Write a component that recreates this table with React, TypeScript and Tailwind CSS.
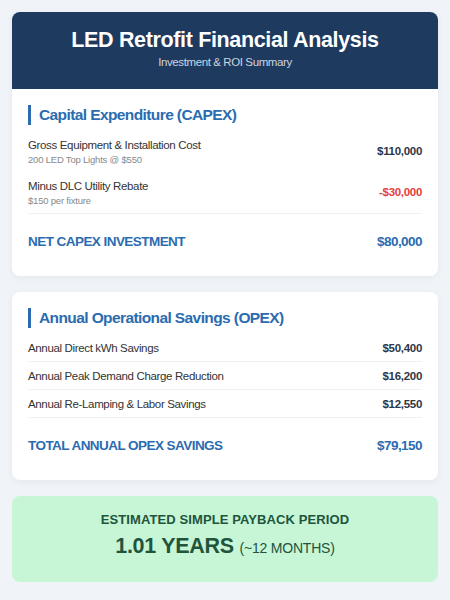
import React from 'react';

const capexRows = [
  { label: 'Gross Equipment & Installation Cost', sub: '200 LED Top Lights @ $550', value: '$110,000', negative: false },
  { label: 'Minus DLC Utility Rebate', sub: '$150 per fixture', value: '-$30,000', negative: true },
];

const opexRows = [
  { label: 'Annual Direct kWh Savings', value: '$50,400' },
  { label: 'Annual Peak Demand Charge Reduction', value: '$16,200' },
  { label: 'Annual Re-Lamping & Labor Savings', value: '$12,550' },
];

const SectionTitle = ({ children }: { children: React.ReactNode }) => (
  <h2 className="mb-1.5 border-l-[3px] border-[#2b6cb0] pl-2 text-[15.5px] leading-5 font-bold tracking-[-0.6px] text-[#2b6cb0]">
    {children}
  </h2>
);

const TotalRow = ({ label, value }: { label: string; value: string }) => (
  <div className="flex items-center justify-between border-t border-[#edf2f7] pt-5 pb-[10px] text-[13.5px] leading-4 font-bold tracking-[-0.55px] text-[#2b6cb0]">
    <span>{label}</span>
    <span>{value}</span>
  </div>
);

export default function App() {
  return (
    <div className="min-h-screen bg-[#f0f4f8] p-3 font-['Liberation_Sans',Arial,sans-serif]">
      {/* Header + CAPEX */}
      <div className="rounded-lg bg-white shadow-[0_2px_8px_rgba(0,0,0,0.05)]">
        <header className="rounded-t-lg bg-[#1e3a5f] pt-[14px] pb-[19px] text-center">
          <h1 className="text-[21.5px] leading-7 font-bold tracking-[-0.35px] text-white">LED Retrofit Financial Analysis</h1>
          <p className="text-[11.5px] leading-4 tracking-[-0.4px] text-[#cbd5e0]">Investment &amp; ROI Summary</p>
        </header>
        <section className="px-4 pt-4 pb-4">
          <SectionTitle>Capital Expenditure (CAPEX)</SectionTitle>
          {capexRows.map((r) => (
            <div key={r.label} className="flex items-center justify-between pt-[6px] pb-[5px]">
              <div>
                <div className="text-[11.5px] leading-4 tracking-[-0.35px] text-[#333]">{r.label}</div>
                <div className="text-[9.5px] leading-[14px] tracking-[-0.2px] text-[#888]">{r.sub}</div>
              </div>
              <div className={`text-[11.5px] font-bold tracking-[-0.3px] ${r.negative ? 'text-[#e53e3e]' : 'text-[#2d3748]'}`}>{r.value}</div>
            </div>
          ))}
          <TotalRow label="NET CAPEX INVESTMENT" value="$80,000" />
        </section>
      </div>

      {/* OPEX */}
      <section className="mt-4 rounded-lg bg-white px-4 pt-4 pb-4 shadow-[0_2px_8px_rgba(0,0,0,0.05)]">
        <SectionTitle>Annual Operational Savings (OPEX)</SectionTitle>
        {opexRows.map((r, i) => (
          <div
            key={r.label}
            className={`flex items-center justify-between pt-[6px] pb-[5px] text-[11.5px] leading-4 tracking-[-0.35px] ${i < opexRows.length - 1 ? 'border-b border-[#edf2f7]' : ''}`}
          >
            <span className="text-[#333]">{r.label}</span>
            <span className="font-bold tracking-[-0.3px] text-[#2d3748]">{r.value}</span>
          </div>
        ))}
        <TotalRow label="TOTAL ANNUAL OPEX SAVINGS" value="$79,150" />
      </section>

      {/* Payback */}
      <div className="mt-4 rounded-lg bg-[#c6f6d5] pt-4 pb-5 text-center text-[#22543d]">
        <div className="mb-1 text-[13px] leading-4 font-bold tracking-[0.1px]">ESTIMATED SIMPLE PAYBACK PERIOD</div>
        <div className="text-[21.5px] leading-7 font-bold tracking-[-0.3px]">
          1.01 YEARS <span className="text-[14px] font-normal tracking-[-0.2px]">(~12 MONTHS)</span>
        </div>
      </div>
    </div>
  );
}
